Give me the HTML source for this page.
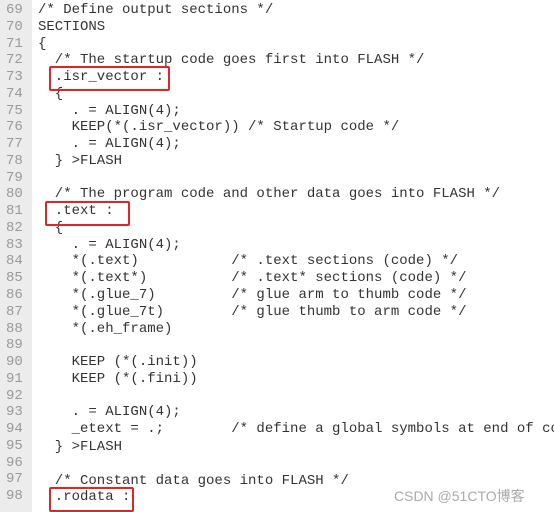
<!DOCTYPE html>
<html><head><style>
body{margin:0;width:554px;height:512px;overflow:hidden;background:#fff;position:relative;font-family:"Liberation Mono",monospace;font-size:14px;}
.g{position:absolute;left:0;top:0;width:32px;height:512px;background:#ececec;}
pre{margin:0;position:absolute;top:2px;line-height:16.76px;font-family:inherit;font-size:14px;overflow:hidden;}
.n{left:6px;color:#999;}
.c{left:38px;width:516px;color:#333;}
.b{position:absolute;border:2px solid #e0252a;border-radius:2px;}
.w{position:absolute;left:394px;top:486px;font-family:"Liberation Sans","Noto Sans CJK SC",sans-serif;font-size:14px;color:#aaa;}
</style></head><body>
<div class="g"></div>
<pre class="n">69
70
71
72
73
74
75
76
77
78
79
80
81
82
83
84
85
86
87
88
89
90
91
92
93
94
95
96
97
98</pre>
<pre class="c">/* Define output sections */
SECTIONS
{
  /* The startup code goes first into FLASH */
  .isr_vector :
  {
    . = ALIGN(4);
    KEEP(*(.isr_vector)) /* Startup code */
    . = ALIGN(4);
  } >FLASH

  /* The program code and other data goes into FLASH */
  .text :
  {
    . = ALIGN(4);
    *(.text)           /* .text sections (code) */
    *(.text*)          /* .text* sections (code) */
    *(.glue_7)         /* glue arm to thumb code */
    *(.glue_7t)        /* glue thumb to arm code */
    *(.eh_frame)

    KEEP (*(.init))
    KEEP (*(.fini))

    . = ALIGN(4);
    _etext = .;        /* define a global symbols at end of co</pre>
<pre class="c" style="top:439px">  } >FLASH

  /* Constant data goes into FLASH */
  .rodata :</pre>
<div class="b" style="left:49px;top:66px;width:117px;height:21px"></div>
<div class="b" style="left:45px;top:201px;width:81px;height:21px"></div>
<div class="b" style="left:49px;top:487px;width:81px;height:21px"></div>
<div class="w">CSDN @51CTO博客</div>
</body></html>
